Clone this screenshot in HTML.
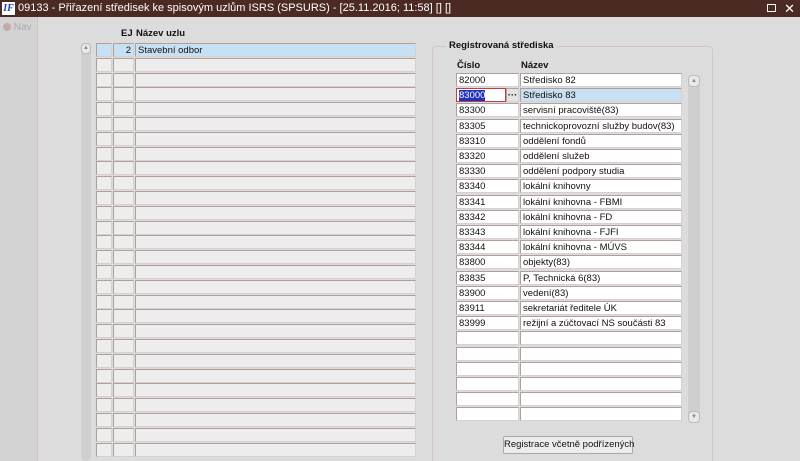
<!DOCTYPE html>
<html><head><meta charset="utf-8"><style>
*{margin:0;padding:0;box-sizing:border-box}
html,body{width:800px;height:461px;overflow:hidden}
body{background:#dcdcdc;font-family:"Liberation Sans",Arial,sans-serif;font-size:9.5px;color:#111;position:relative}
.a{position:absolute}
.tb{left:0;top:0;width:800px;height:17px;background:#4a2a22;color:#fff;font-size:11px;line-height:17px;padding-left:18px;white-space:nowrap}
.c{position:absolute;background:#ededed;border:1px solid #b0a09c;border-right-color:#d8d0ce;border-bottom-color:#d8d0ce;height:14px;line-height:13px;padding-left:2px;white-space:nowrap;overflow:hidden}
.w{background:#fff}
.s{background:#c8e0f4}
.sb{background:#cfcfcf;border-radius:6px}
</style></head><body>
<div class="a tb">09133 - Přiřazení středisek ke spisovým uzlům ISRS (SPSURS) - [25.11.2016; 11:58] [] []</div>
<div class="a" style="left:2px;top:2px;width:13px;height:13px;background:#fff;color:#2340a0;font:bold italic 10px 'Liberation Serif',serif;line-height:13px;text-align:center">IF</div>
<div class="a" style="right:24px;top:4px;width:9px;height:8px;border:1px solid #fff"></div>
<div class="a" style="right:5px;top:0;color:#fff;font-size:13px;line-height:17px">✕</div>
<div class="a" style="left:0;top:17px;width:38px;height:444px;background:#d3d3d3;border-right:1px solid #d8c0bc"></div>
<div class="a" style="left:3px;top:22px;color:#aaa;font-size:10px"><span style="display:inline-block;width:8px;height:8px;border-radius:50%;background:#c8aaa6;vertical-align:-1px"></span> Nav</div>
<div class="a" style="left:121px;top:28px;font-weight:bold;font-size:9.5px">EJ</div>
<div class="a" style="left:136px;top:28px;font-weight:bold;font-size:9.5px">Název uzlu</div>
<div class="a sb" style="left:81px;top:43px;width:10px;height:418px"></div>
<div class="a" style="left:81px;top:43px;width:10px;height:11px;background:#e8e8e8;border:1px solid #bbb;border-radius:4px;font-size:6px;text-align:center;color:#888;line-height:9px">▲</div>
<div id="L"></div>
<div class="a" style="left:432px;top:46px;width:281px;height:420px;border:1px solid #d8c4c0;border-radius:4px"></div>
<div class="a" style="left:446px;top:40px;background:#dcdcdc;padding:0 3px;font-weight:bold;font-size:9.5px">Registrovaná střediska</div>
<div class="a" style="left:457px;top:60px;font-weight:bold">Číslo</div>
<div class="a" style="left:521px;top:60px;font-weight:bold">Název</div>
<div class="a sb" style="left:688px;top:75px;width:12px;height:348px"></div>
<div class="a" style="left:688px;top:75px;width:12px;height:12px;background:#e8e8e8;border:1px solid #bbb;border-radius:4px;font-size:6px;text-align:center;color:#888;line-height:10px">▲</div>
<div class="a" style="left:688px;top:411px;width:12px;height:12px;background:#e8e8e8;border:1px solid #bbb;border-radius:4px;font-size:6px;text-align:center;color:#888;line-height:10px">▼</div>
<div id="R"></div>
<div class="a" style="left:503px;top:436px;width:130px;height:18px;background:#ececec;border:1px solid #b0a8a6;border-radius:2px;text-align:center;line-height:16px;font-size:9.5px;white-space:nowrap">Registrace včetně podřízených</div>
<script>
var L='',i;
for(i=0;i<28;i++){var t=43+i*14.8,s=i==0?' s':'';
L+='<div class="c'+s+'" style="left:96px;top:'+t+'px;width:16px"></div>';
L+='<div class="c'+s+'" style="left:113px;top:'+t+'px;width:21px;text-align:right;padding-right:2px">'+(i==0?'2':'')+'</div>';
L+='<div class="c'+s+'" style="left:135px;top:'+t+'px;width:281px">'+(i==0?'Stavební odbor':'')+'</div>';}
document.getElementById('L').outerHTML=L;
var d=[['82000','Středisko 82'],['83000','Středisko 83'],['83300','servisní pracoviště(83)'],['83305','technickoprovozní služby budov(83)'],['83310','oddělení fondů'],['83320','oddělení služeb'],['83330','oddělení podpory studia'],['83340','lokální knihovny'],['83341','lokální knihovna - FBMI'],['83342','lokální knihovna - FD'],['83343','lokální knihovna - FJFI'],['83344','lokální knihovna - MÚVS'],['83800','objekty(83)'],['83835','P, Technická 6(83)'],['83900','vedení(83)'],['83911','sekretariát ředitele ÚK'],['83999','režijní a zúčtovací NS součásti 83']];
var R='';
for(i=0;i<23;i++){var t=73+i*15.2,r=d[i]||['',''];
if(i==1){R+='<div class="c w" style="left:456px;top:'+t+'px;width:50px;border-color:#c04040"><span style="background:#2030c0;color:#fff">83000</span></div><div class="c" style="left:506px;top:'+t+'px;width:13px;background:#e4e4e4;text-align:center;font-weight:bold;padding:0">···</div><div class="c s" style="left:520px;top:'+t+'px;width:162px">'+r[1]+'</div>';continue;}
R+='<div class="c w" style="left:456px;top:'+t+'px;width:63px">'+r[0]+'</div>';
R+='<div class="c w" style="left:520px;top:'+t+'px;width:162px">'+r[1]+'</div>';}
document.getElementById('R').outerHTML=R;
</script>
</body></html>
